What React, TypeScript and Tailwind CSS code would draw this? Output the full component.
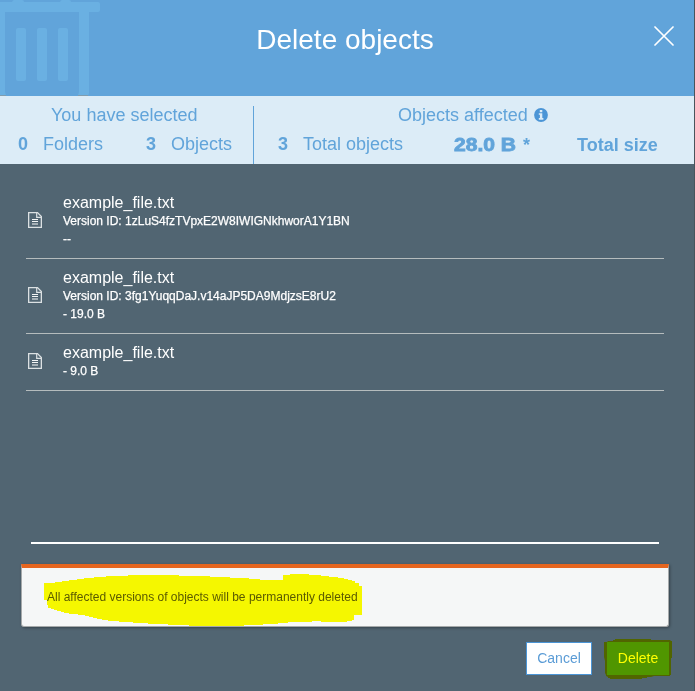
import React from "react";

type Item = { name: string; version?: string; size: string };

const items: Item[] = [
  { name: "example_file.txt", version: "Version ID: 1zLuS4fzTVpxE2W8IWIGNkhworA1Y1BN", size: "--" },
  { name: "example_file.txt", version: "Version ID: 3fg1YuqqDaJ.v14aJP5DA9MdjzsE8rU2", size: "- 19.0 B" },
  { name: "example_file.txt", size: "- 9.0 B" },
];

function TrashArt() {
  return (
    <svg className="absolute left-0 top-0" width="100" height="96" fill="#6ab0e2">
      <path d="M12 2 Q13 0 14 0 H22 Q24 0 24 2Z M60 2 Q61 0 62 0 H69 Q71 0 71 2Z" />
      <path d="M0 2 H98 Q100 2 100 4 V10 Q100 12 98 12 H0Z" />
      <path d="M0 12 H5 V91 Q5 93 6 95 H0Z M79 12 H89 V93 Q89 95 88 95 H78 Q79 93 79 91Z" />
      <rect x="16" y="28" width="10" height="53" rx="2" />
      <rect x="37" y="28" width="10" height="53" rx="2" />
      <rect x="58" y="28" width="10" height="53" rx="2" />
      <path fill="#809daf" d="M0 95h6v1H0zM78 95h10v1H78z" />
    </svg>
  );
}

function FileIcon() {
  return (
    <svg width="14" height="16" viewBox="0 0 14 16" fill="none">
      <path d="M.65 .65H9.5L13.35 4.5V15.35H.65Z" stroke="#dce1e3" strokeWidth="1.3" />
      <path d="M8.7 .8V5.3H13.2" stroke="#dce1e3" strokeWidth="1.2" />
      <path d="M4 7.5H10M4 9.5H10" stroke="#f3f5f5" />
      <path d="M4 11H10V13H4Z" fill="#a4afb5" />
    </svg>
  );
}

function InfoIcon() {
  return (
    <svg className="ml-1.5" width="14" height="14" viewBox="0 0 14 14">
      <circle cx="7" cy="7" r="6.9" fill="#4b95d6" />
      <path d="M5.8 2H8.3V4.2H5.8ZM4.8 5.2H8.3V10H9.4V11.7H4.8V10H5.9V6.8H4.8Z" fill="#dcecf7" />
    </svg>
  );
}

export default function App() {
  return (
    <div className="flex h-[691px] w-[695px] flex-col overflow-hidden border-r border-[#48545c] bg-[#516572] font-['Liberation_Sans',Arial,sans-serif] text-white">
      <header className="relative flex h-24 shrink-0 justify-center bg-[#61a4da]">
        <TrashArt />
        <h1 className="mt-[21px] pr-1 text-[28px] leading-[38px] whitespace-nowrap">Delete objects</h1>
        <button aria-label="Close" className="absolute left-[654px] top-[26px]">
          <svg width="20" height="20" viewBox="0 0 20 20">
            <path d="M1 1 19 19M19 1 1 19" stroke="#fff" strokeWidth="1.7" strokeLinecap="round" />
          </svg>
        </button>
      </header>

      <section className="flex h-[68px] shrink-0 bg-[#dcecf7] text-[18px] leading-5 whitespace-nowrap text-[#61a4da]">
        <div className="w-[253px] pt-[9px]">
          <div className="pl-[51px]">You have selected</div>
          <div className="mt-[9px] flex pl-[18px]">
            <b className="w-[25px]">0</b>
            <span className="w-[103px]">Folders</span>
            <b className="w-[25px]">3</b>
            <span>Objects</span>
          </div>
        </div>
        <div className="mt-2.5 w-px bg-[#61a4da]" />
        <div className="flex-1 pt-[9px]">
          <div className="flex items-center pl-36">
            Objects affected
            <InfoIcon />
          </div>
          <div className="mt-[9px] flex pl-6">
            <b className="w-[25px]">3</b>
            <span className="w-[151px]">Total objects</span>
            <span className="flex w-[123px] pt-px">
              <span className="w-[69px]">
                <span className="inline-block origin-left scale-x-[1.17] font-bold [-webkit-text-stroke:0.8px_#61a4da]">28.0 B</span>
              </span>
              <b>*</b>
            </span>
            <b className="pt-px">Total size</b>
          </div>
        </div>
      </section>

      <main className="ml-[26px] h-[378px] w-[638px] shrink-0 pt-5">
        {items.map((it, i) => (
          <div key={i} className="flex items-center border-b border-[#b5bcbd] pt-2 pb-2.5">
            <div className="w-[37px] pl-0.5">
              <FileIcon />
            </div>
            <div className="text-[12px] leading-[18px] whitespace-nowrap [-webkit-text-stroke:0.25px_#fff]">
              <div className="h-5 text-[16px] leading-[22px] [-webkit-text-stroke:0px]">{it.name}</div>
              {it.version && <div>{it.version}</div>}
              <div>{it.size}</div>
            </div>
          </div>
        ))}
      </main>

      <div className="ml-[31px] h-0.5 w-[628px] shrink-0 bg-white" />

      <div className="relative mt-5 ml-[21px] h-[63px] w-[648px] shrink-0 rounded-b-[3px] border border-t-4 border-[#a5a9aa] border-t-[#e5651f] bg-[#f5f7f7] pt-5 pl-[25px] text-[12px] leading-[18px] whitespace-nowrap text-[#5a5a5a] shadow-[1px_1px_3px_rgba(0,0,0,0.35)]">
        All affected versions of objects will be permanently deleted
        <svg className="absolute left-[22px] top-[5px] mix-blend-multiply" width="320" height="54" fill="#ffff00">
          <path d="M0 10H11V9H18V8H25V7H33V6H40V5H50V4H62V3H84V2H135V3H166V4H186V5H205V6H216V7H239V2H246V1H265V2H277V3H285V4H294V5H300V6H304V7H308V8H311V10H315V13H318V42H310V47H308V48H303V49H277V48H268V49H244V50H234V51H219V52H200V53H145V52H124V51H104V50H89V49H75V48H64V47H58V46H53V45H49V44H45V43H41V42H34V41H25V40H20V39H17V38H13V37H10V36H7V35H4V32H3V27H0Z" />
        </svg>
      </div>

      <footer className="relative mt-[15px] flex h-[33px] shrink-0 pl-[526px] text-[14px] leading-[31px] whitespace-nowrap">
        <button className="h-[33px] w-[66px] border border-[#4b95d6] bg-white text-[#5b9cd6]">Cancel</button>
        <button className="ml-[15px] h-[33px] w-[62px] bg-[#50965a] text-white">Delete</button>
        <svg className="absolute left-[604px] top-[-3px] mix-blend-multiply" width="70" height="42" fill="#ffff00">
          <path d="M3 3 4 2H9V1H11V0H47V1H66L67 2H68V19H67V36H66V37H50L47 38H43V39H38V40H6V39H4V38L2 37V36L1 34V22L0 18V3Z" />
        </svg>
      </footer>
    </div>
  );
}
